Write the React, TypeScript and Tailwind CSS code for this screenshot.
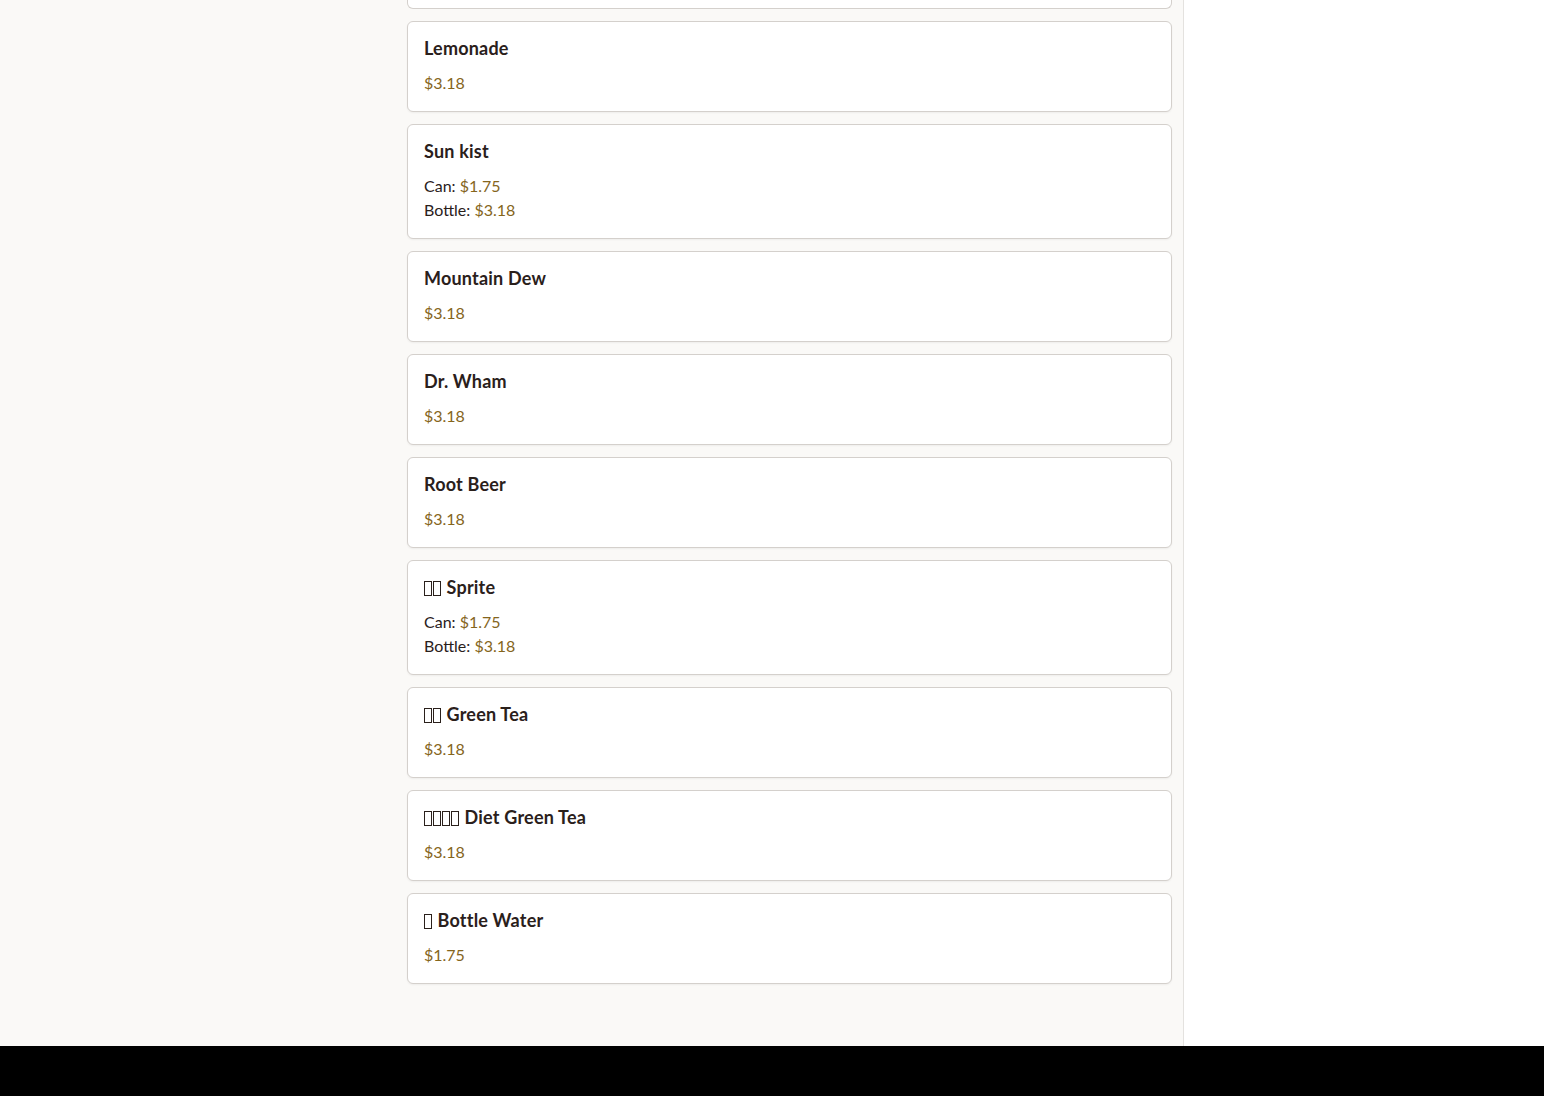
import React from "react";

type Item = {
    name: string;
    glyphs?: number; // missing-glyph boxes shown before the name
    price?: string;
    can?: string;
    bottle?: string;
};

const items: Item[] = [
    { name: "Lemonade", price: "$3.18" },
    { name: "Sun kist", can: "$1.75", bottle: "$3.18" },
    { name: "Mountain Dew", price: "$3.18" },
    { name: "Dr. Wham", price: "$3.18" },
    { name: "Root Beer", price: "$3.18" },
    { name: "Sprite", glyphs: 2, can: "$1.75", bottle: "$3.18" },
    { name: "Green Tea", glyphs: 2, price: "$3.18" },
    { name: "Diet Green Tea", glyphs: 4, price: "$3.18" },
    { name: "Bottle Water", glyphs: 1, price: "$1.75" },
];

const font = { fontFamily: "Lato, 'Noto Sans', 'DejaVu Sans', sans-serif" };

function Tofu() {
    return <span className="mr-px inline-block h-[15px] w-[8px] border border-[#2a201b] align-[-2px]" />;
}

function MenuCard({ item }: { item: Item }) {
    return (
        <div className="rounded-md border border-[#d4d0cc] bg-white p-4 shadow-[0_1px_2px_rgba(0,0,0,0.05)]">
            <h3 className="mb-3 text-lg font-bold leading-[21px] tracking-[0.2px] text-[#2a201b]">
                {item.glyphs ? (
                    <>
                        {Array.from({ length: item.glyphs }).map((_, i) => (
                            <Tofu key={i} />
                        ))}{" "}
                    </>
                ) : null}
                {item.name}
            </h3>
            {item.price ? (
                <p className="text-base leading-6 text-[#85651c]">{item.price}</p>
            ) : (
                <div className="text-base leading-6">
                    <p className="text-[#2a201b]">
                        Can: <span className="text-[#85651c]">{item.can}</span>
                    </p>
                    <p className="text-[#2a201b]">
                        Bottle: <span className="text-[#85651c]">{item.bottle}</span>
                    </p>
                </div>
            )}
        </div>
    );
}

export default function App() {
    return (
        <div className="flex min-h-screen flex-col bg-black" style={font}>
            <div className="flex h-[1046px] overflow-hidden">
                <main className="flex-1 border-r border-[#e4e2df] bg-[#faf9f7]">
                    <div className="ml-[407px] flex w-[765px] flex-col gap-3">
                        {/* tail of the card above the fold */}
                        <div className="h-[9px] rounded-b-md border-x border-b border-[#d4d0cc] bg-white" />
                        {items.map((item) => (
                            <MenuCard key={item.name} item={item} />
                        ))}
                    </div>
                </main>
                <aside className="w-[360px] bg-white" />
            </div>
            <div className="h-[50px] bg-black" />
        </div>
    );
}
